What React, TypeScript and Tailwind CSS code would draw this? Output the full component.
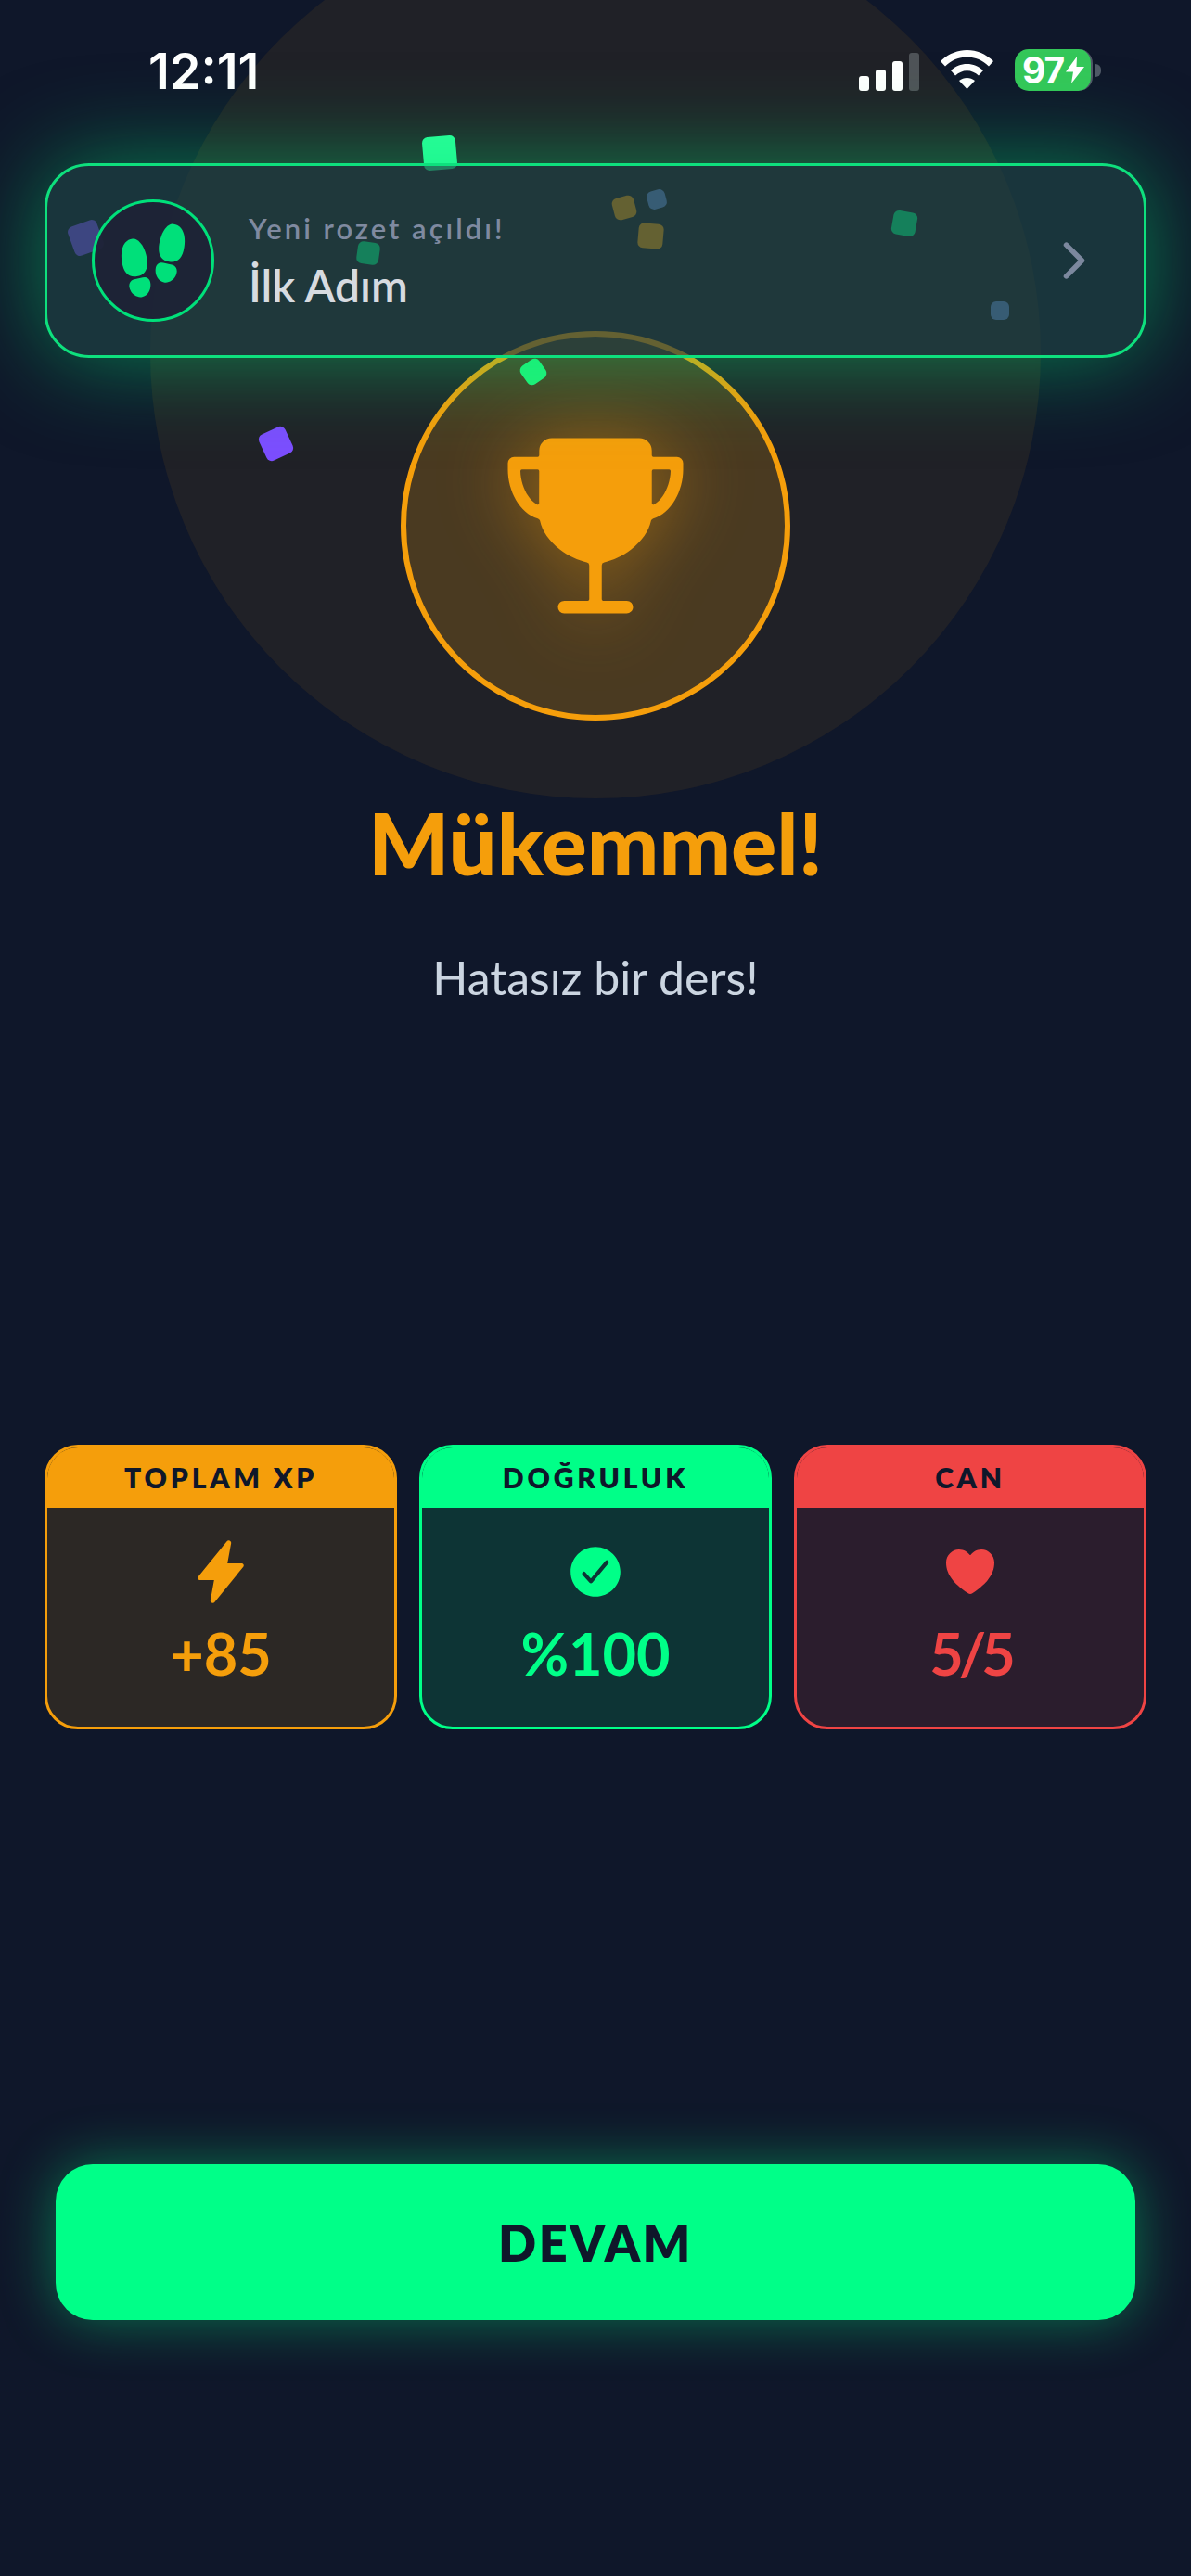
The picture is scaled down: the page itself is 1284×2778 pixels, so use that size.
import { IoCheckmarkCircle, IoChevronForward, IoFlash, IoFootsteps, IoHeart, IoTrophy } from 'react-icons/io5';

const confetti = [
  { id: 1, cls: 'left-[456px] top-[147px] w-[36px] h-[36px] rotate-[-5deg] bg-[#2bff9b]' },
  { id: 2, cls: 'left-[76px] top-[240px] w-[33px] h-[33px] rotate-[-20deg] bg-[#7c4dff]' },
  { id: 3, cls: 'left-[385px] top-[261px] w-[24px] h-[24px] rotate-[8deg] bg-[#00ff88]' },
  { id: 4, cls: 'left-[661px] top-[212px] w-[24px] h-[24px] rotate-[-15deg] bg-[#f59e0b]' },
  { id: 5, cls: 'left-[698px] top-[205px] w-[20px] h-[20px] rotate-[-15deg] bg-[#6b8fd6]' },
  { id: 6, cls: 'left-[688px] top-[241px] w-[27px] h-[27px] rotate-[5deg] bg-[#f59e0b]' },
  { id: 7, cls: 'left-[962px] top-[228px] w-[26px] h-[26px] rotate-[10deg] bg-[#00ff88]' },
  { id: 8, cls: 'left-[1068px] top-[325px] w-[20px] h-[20px] bg-[#6b8fd6]' },
  { id: 9, cls: 'left-[563px] top-[389px] w-[24px] h-[24px] rotate-[-35deg] bg-[#22f27a]' },
  { id: 10, cls: 'left-[282px] top-[463px] w-[31px] h-[31px] rotate-[-25deg] bg-[#7c4dff]' },
];

const stats = [
  {
    label: 'TOPLAM XP',
    value: '+85',
    border: 'border-[#f59e0b]',
    head: 'bg-[#f59e0b]',
    body: 'bg-[#f59e0b]/[0.125]',
    text: 'text-[#f59e0b]',
    spacing: 'tracking-normal',
    icon: <IoFlash size={72} />,
  },
  {
    label: 'DOĞRULUK',
    value: '%100',
    border: 'border-[#00ff88]',
    head: 'bg-[#00ff88]',
    body: 'bg-[#00ff88]/[0.125]',
    text: 'text-[#00ff88]',
    spacing: 'tracking-normal',
    icon: <IoCheckmarkCircle size={66} />,
  },
  {
    label: 'CAN',
    value: '5/5',
    border: 'border-[#ef4444]',
    head: 'bg-[#ef4444]',
    body: 'bg-[#ef4444]/[0.125]',
    text: 'text-[#ef4444]',
    spacing: 'tracking-[-5px]',
    icon: <IoHeart size={64} />,
  },
];

function StatusBar() {
  return (
    <div className="flex items-start justify-between pt-[53px] pl-[160px] pr-[97px] h-[120px]">
      <span className="font-['Inter',sans-serif] font-semibold text-[54px] leading-[48px] text-white">
        12:11
      </span>
      <div className="flex items-end">
        <div className="flex items-end gap-[7px] h-[43px] mr-[23px]">
          <div className="w-[11px] h-[16px] rounded-[3px] bg-white" />
          <div className="w-[11px] h-[23px] rounded-[3px] bg-white" />
          <div className="w-[11px] h-[32px] rounded-[3px] bg-white" />
          <div className="w-[11px] h-[41px] rounded-[3px] bg-[#4f5358]" />
        </div>
        <svg width="57" height="42" viewBox="0 0 57 42" className="mb-[2px] mr-[23px]" fill="#ffffff">
          <path d="M28.5 0C39 0 49 4.3 57 12L52 17.5C45.5 11 37.3 7.4 28.5 7.4C19.7 7.4 11.5 11 5 17.5L0 12C8 4.3 18 0 28.5 0Z" />
          <path d="M28.5 15C35 15 41 17.5 46 22L41 27.5C37.5 24.3 33 22.3 28.5 22.3C24 22.3 19.5 24.3 16 27.5L11 22C16 17.5 22 15 28.5 15Z" />
          <path d="M28.5 30C31.5 30 34.5 31 37 33L28.5 42L20 33C22.5 31 25.5 30 28.5 30Z" />
        </svg>
        <div className="flex items-center">
          <div className="flex items-center w-[84px] h-[45px] rounded-[15px] bg-[#34c759] pl-[8px] border-r-[2px] border-[#4f5867]">
            <span className="font-['Inter',sans-serif] font-bold text-[39px] leading-none tracking-[-1px] text-white">97</span>
            <svg width="20" height="29" viewBox="0 0 20 29" fill="#ffffff" className="ml-[2px]">
              <path d="M12 0L0 16.5H8L6 29L20 11H11.5Z" />
            </svg>
          </div>
          <div className="ml-[3px] w-[6px] h-[14px] rounded-r-[6px] bg-[#4f5867]" />
        </div>
      </div>
    </div>
  );
}

function BadgeBanner() {
  return (
    <div className="absolute left-[48px] top-[176px] w-[1188px] h-[210px] flex items-center pl-[48px] pr-[45px] rounded-[48px] border-[3px] border-[#0ee07d] bg-[rgba(31,68,69,0.68)] shadow-[0_0_100px_rgba(0,230,118,0.5)]">
      <div className="flex items-center justify-center w-[132px] h-[132px] rounded-full border-[3px] border-[#00e07a] bg-[#1e2336]/95 text-[#00e07a]">
        <IoFootsteps size={84} />
      </div>
      <div className="ml-[37px] flex-1 font-['Lato',sans-serif]">
        <div className="text-[31px] leading-[40px] font-semibold tracking-[3px] text-[#7f8aa0]">Yeni rozet açıldı!</div>
        <div className="mt-[13px] text-[48px] leading-[58px] font-semibold text-[#d7dbe0]">İlk Adım</div>
      </div>
      <IoChevronForward size={60} className="text-[#7c889e]" />
    </div>
  );
}

export default function App() {
  return (
    <div className="relative w-full h-[2778px] overflow-hidden bg-[#0f172a] font-['Lato',sans-serif]">
      <div className="absolute left-[162px] top-[-99px] w-[960px] h-[960px] rounded-full bg-[#f59e0b]/[0.08]" />

      <div className="relative">
        <StatusBar />

        <div className="mt-[237px] flex justify-center">
          <div className="flex items-center justify-center w-[420px] h-[420px] rounded-full border-[6px] border-[#f59e0b] bg-[#f59e0b]/20 text-[#f59e0b]">
            <IoTrophy size={216} className="drop-shadow-[0_0_40px_rgba(245,158,11,0.45)]" />
          </div>
        </div>

        <h1 className="mt-[77px] text-center text-[92px] leading-[110px] font-black text-[#f59e0b]">Mükemmel!</h1>
        <p className="mt-[60px] text-center text-[50px] leading-[60px] text-[#cbd5e1]">Hatasız bir ders!</p>

        <div className="mt-[474px] grid grid-cols-3 gap-6 px-12">
          {stats.map((s) => (
            <div key={s.label} className={`h-[307px] rounded-[36px] border-[3px] overflow-hidden flex flex-col ${s.border} ${s.body}`}>
              <div className={`h-[65px] flex items-center justify-center text-[30px] font-extrabold tracking-[3.8px] text-[#0f172a] ${s.head}`}>
                {s.label}
              </div>
              <div className={`flex-1 flex flex-col items-center pt-[33px] ${s.text}`}>
                <div className="h-[72px] flex items-center">{s.icon}</div>
                <div className={`mt-[16px] text-[63px] leading-[72px] font-bold ${s.spacing}`}>{s.value}</div>
              </div>
            </div>
          ))}
        </div>

        <button className="mt-[469px] ml-[60px] w-[1164px] h-[168px] rounded-[40px] bg-[#00ff88] text-[54px] font-extrabold tracking-[2.5px] text-[#0f172a] shadow-[0_0_60px_rgba(0,255,136,0.4)]">
          DEVAM
        </button>
      </div>

      {confetti.map((c) => (
        <div key={c.id} className={`absolute rounded-[6px] ${c.cls}`} />
      ))}

      <BadgeBanner />
    </div>
  );
}
